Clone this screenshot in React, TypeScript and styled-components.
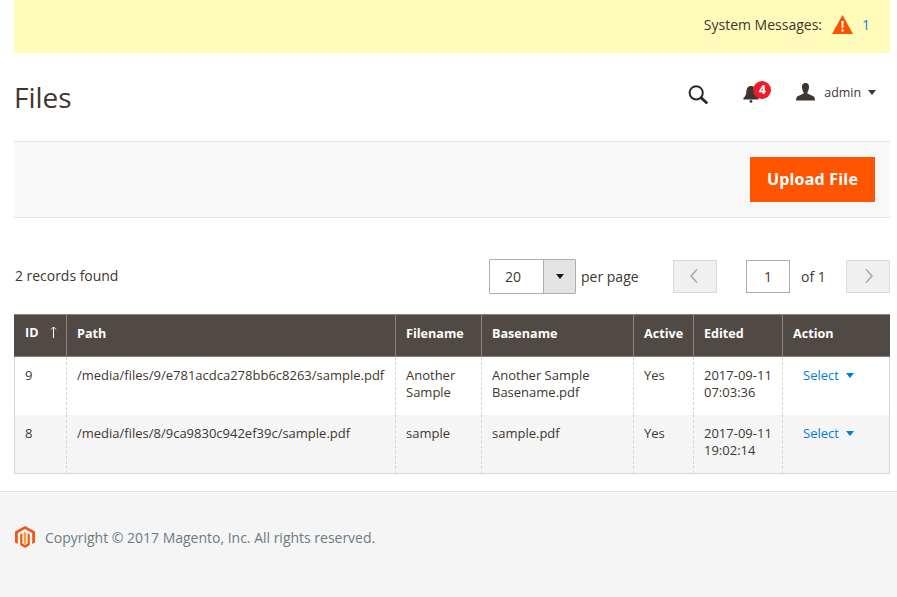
import React from "react";
import styled, { createGlobalStyle } from "styled-components";

const Global = createGlobalStyle`
  html, body { margin: 0; padding: 0; height: 100%; background: #fff; overflow: hidden; }
  body { font-family: "Open Sans", "Liberation Sans", sans-serif; font-size: 14px; color: #41362f; }
  #root { height: 100%; }
`;

const Page = styled.div`
  display: flex; flex-direction: column; height: 597px; width: 897px;
`;
const Main = styled.div`
  padding: 0 7px 0 14px; height: 491px; box-sizing: border-box;
`;
const Banner = styled.div`
  display: flex; align-items: center; justify-content: flex-end; height: 53px; box-sizing: border-box;
  background: #fffbbb; padding: 0 20px 4px 0; font-size: 14px; color: #41362f;
`;
const BannerCount = styled.span`color: #0a86d8; margin-left: 9px;`;
const WarnIcon = styled.svg`margin-left: 10px; display: block;`;
const Header = styled.div`
  display: flex; align-items: center; justify-content: space-between; height: 88px; box-sizing: border-box;
`;
const Title = styled.h1`
  margin: 0; font-size: 28px; font-weight: 400; color: #41362f; line-height: 36px;
`;
const HeaderActions = styled.div`
  display: flex; align-items: center; padding-right: 14px; position: relative; top: -3px;
`;
const SearchSlot = styled.div`display: flex;`;
const BellSlot = styled.div`display: flex; position: relative; margin-left: 35px;`;
const UserSlot = styled.div`display: flex; align-items: center; margin: 0 0 4px 36px;`;
const Badge = styled.span`
  position: absolute; left: 10px; top: -4px; width: 18px; height: 18px; border-radius: 50%;
  background: #ee1c2a; color: #fff; font-size: 12px; font-weight: 700; display: flex; align-items: center; justify-content: center;
  line-height: 1;
`;
const UserName = styled.span`font-size: 12.4px; color: #41362f; margin-left: 9px;`;
const Caret = styled.span<{ $color?: string }>`
  display: inline-block; width: 0; height: 0; border-left: 4px solid transparent; border-right: 4px solid transparent;
  border-top: 5px solid ${(p) => p.$color || "#41362f"};
`;
const UserCaret = styled(Caret)`margin-left: 7px;`;
const ActionsBar = styled.div`
  display: flex; justify-content: flex-end; align-items: center; height: 77px; box-sizing: border-box;
  background: #f8f8f8; border-top: 1px solid #e3e3e3; border-bottom: 1px solid #e3e3e3; padding-right: 15px;
`;
const UploadButton = styled.button`
  width: 125px; height: 45px; background: #ff5501; border: 0; color: #fff; padding: 0 0 2px;
  font: 700 16px "Open Sans", sans-serif; letter-spacing: 0.2px;
`;
const Toolbar = styled.div`
  display: flex; align-items: center; height: 36px; margin-top: 40px; margin-bottom: 20px;
`;
const Records = styled.div`margin-left: 1px; flex: 1; color: #41362f; position: relative; top: -1px; letter-spacing: -0.03px;`;
const SelectBox = styled.div`
  display: flex; width: 87px; height: 35px; box-sizing: border-box; border: 1px solid #adadad; border-radius: 1px; background: #fff;
`;
const SelectValue = styled.div`
  width: 53px; display: flex; align-items: center; padding-left: 15px; box-sizing: border-box; color: #41362f;
`;
const SelectArrow = styled.div`
  flex: 1; background: #e3e3e3; border-left: 1px solid #adadad; display: flex; align-items: center; justify-content: center;
`;
const PerPage = styled.span`margin-left: 5px; width: 57px; margin-right: 35px; white-space: nowrap;`;
const PageButton = styled.div`
  width: 44px; height: 33px; box-sizing: border-box; background: #f0f0f0; border: 1px solid #d9d9d9;
  display: flex; align-items: center; justify-content: center;
`;
const PageInput = styled.div`
  width: 44px; height: 33px; box-sizing: border-box; border: 1px solid #adadad; background: #fff; margin-left: 29px;
  display: flex; align-items: center; justify-content: center; color: #41362f;
`;
const OfText = styled.span`margin-left: 11px; width: 45px; white-space: nowrap;`;
const Grid = styled.table`
  width: 876px; border-collapse: separate; border-spacing: 0; table-layout: fixed; font-size: 13px;
  line-height: 17px;
`;
const Th = styled.th`
  background: #514943; color: #fff; font-weight: 700; font-size: 12.6px; text-align: left; height: 43px; padding: 0 10px 5px; box-sizing: border-box;
  border-top: 1px solid #8a837f; border-bottom: 1px solid #8a837f; border-left: 1px solid #8a837f;
  white-space: nowrap;
  &:first-child { border-left-color: #514943; }
  &:last-child { border-right: 1px solid #514943; }
`;
const SortArrow = styled.span`
  display: inline-block; margin-left: 11px; vertical-align: -1px;
`;
const Tr = styled.tr<{ $alt?: boolean }>`
  background: ${(p) => (p.$alt ? "#f5f5f5" : "#fff")};
`;
const Td = styled.td<{ $last?: boolean }>`
  vertical-align: top; padding: 10px 10px 0; height: 58px; box-sizing: border-box; color: #41362f;
  border-left: 1px dashed #d6d6d6;
  &:first-child { border-left: 1px solid #d6d6d6; }
  &:last-child { border-right: 1px solid #d6d6d6; }
  ${(p) => (p.$last ? "border-bottom: 1px solid #d6d6d6; height: 59px;" : "")}
`;
const Select = styled.span`
  display: inline-flex; align-items: center; color: #007bdb; margin-left: 10px;
`;
const SelectCaret = styled(Caret)`margin-left: 7px;`;
const Footer = styled.footer`
  flex: 1; background: #f5f5f5; border-top: 1px solid #e3e3e3; display: flex; align-items: center; padding: 0 0 15px 15px; box-sizing: border-box;
`;
const Copyright = styled.span`margin-left: 10px; color: #6c7a85; font-size: 14px; letter-spacing: -0.01px;`;

const rows = [
  { id: "9", path: "/media/files/9/e781acdca278bb6c8263/sample.pdf", name: ["Another", "Sample"], base: ["Another Sample", "Basename.pdf"], date: ["2017-09-11", "07:03:36"] },
  { id: "8", path: "/media/files/8/9ca9830c942ef39c/sample.pdf", name: ["sample"], base: ["sample.pdf"], date: ["2017-09-11", "19:02:14"] },
];

const Lines = ({ v }: { v: string[] }) => (
  <>
    {v.map((s, i) => (
      <React.Fragment key={s}>
        {i > 0 && <br />}
        {s}
      </React.Fragment>
    ))}
  </>
);

export default function App() {
  return (
    <Page>
      <Global />
      <Main>
        <Banner>
          System Messages:
          <WarnIcon width="21" height="19" viewBox="0 0 21 19">
            <path d="M10.5 0 L21 19 H0 Z" fill="#fb5200" />
            <path d="M9.3 6 H11.7 L11.2 13.2 H9.8 Z" fill="#fff" />
            <rect x="9.5" y="14.4" width="2" height="2.2" fill="#fff" />
          </WarnIcon>
          <BannerCount>1</BannerCount>
        </Banner>
        <Header>
          <Title>Files</Title>
          <HeaderActions>
            <SearchSlot>
              <svg width="20" height="19" viewBox="0 0 20 19" fill="none" stroke="#2b2a28" strokeWidth="2">
                <circle cx="8.2" cy="7.8" r="6.6" />
                <path d="M13 12.6 L19.3 18.4" strokeWidth="2.8" />
              </svg>
            </SearchSlot>
            <BellSlot>
              <svg width="17" height="18" viewBox="0 0 17 18" fill="#41362f">
                <path d="M8 1 C4.6 1 3.6 3.6 3.4 6.4 C3.2 9.2 2.4 11.2 0.4 13 V14.4 H15.6 V13 C13.6 11.2 12.8 9.2 12.6 6.4 C12.4 3.6 11.4 1 8 1 Z" />
                <circle cx="8" cy="16.4" r="1.4" />
              </svg>
              <Badge>4</Badge>
            </BellSlot>
            <UserSlot>
              <svg width="19" height="18" viewBox="0 0 19 18" fill="#41362f">
                <path d="M9.5 0 C6.6 0 5.8 2.2 6 4.6 C6.2 6.8 7 8.6 7.6 9.4 V10.6 L1.2 13.6 C0.4 14.1 0.2 16 0 17.6 H19 C18.8 16 18.6 14.1 17.8 13.6 L11.4 10.6 V9.4 C12 8.6 12.8 6.8 13 4.6 C13.2 2.2 12.4 0 9.5 0 Z" />
              </svg>
              <UserName>admin</UserName>
              <UserCaret />
            </UserSlot>
          </HeaderActions>
        </Header>
        <ActionsBar>
          <UploadButton>Upload File</UploadButton>
        </ActionsBar>
        <Toolbar>
          <Records>2 records found</Records>
          <SelectBox>
            <SelectValue>20</SelectValue>
            <SelectArrow>
              <Caret $color="#1a1a1a" />
            </SelectArrow>
          </SelectBox>
          <PerPage>per page</PerPage>
          <PageButton>
            <svg width="10" height="14" viewBox="0 0 10 14" fill="none" stroke="#a6a6a6" strokeWidth="1.5">
              <path d="M7 0.5 L1 7 L7 13.5" />
            </svg>
          </PageButton>
          <PageInput>1</PageInput>
          <OfText>of 1</OfText>
          <PageButton>
            <svg width="10" height="14" viewBox="0 0 10 14" fill="none" stroke="#a6a6a6" strokeWidth="1.5">
              <path d="M3 0.5 L9 7 L3 13.5" />
            </svg>
          </PageButton>
        </Toolbar>
        <Grid>
          <colgroup>
            <col style={{ width: 52 }} />
            <col style={{ width: 329 }} />
            <col style={{ width: 86 }} />
            <col style={{ width: 152 }} />
            <col style={{ width: 60 }} />
            <col style={{ width: 89 }} />
            <col style={{ width: 108 }} />
          </colgroup>
          <thead>
            <tr>
              <Th>
                ID
                <SortArrow>
                  <svg width="7" height="12" viewBox="0 0 7 12" fill="none" stroke="#fff" strokeWidth="1">
                    <path d="M3.5 12 V1 M1 3.5 L3.5 1 L6 3.5" />
                  </svg>
                </SortArrow>
              </Th>
              <Th>Path</Th>
              <Th>Filename</Th>
              <Th>Basename</Th>
              <Th>Active</Th>
              <Th>Edited</Th>
              <Th>Action</Th>
            </tr>
          </thead>
          <tbody>
            {rows.map((r, i) => {
              const last = i === rows.length - 1;
              return (
                <Tr key={r.id} $alt={i % 2 === 1}>
                  <Td $last={last}>{r.id}</Td>
                  <Td $last={last}>{r.path}</Td>
                  <Td $last={last}><Lines v={r.name} /></Td>
                  <Td $last={last}><Lines v={r.base} /></Td>
                  <Td $last={last}>Yes</Td>
                  <Td $last={last}><Lines v={r.date} /></Td>
                  <Td $last={last}>
                    <Select>
                      Select
                      <SelectCaret $color="#007bdb" />
                    </Select>
                  </Td>
                </Tr>
              );
            })}
          </tbody>
        </Grid>
      </Main>
      <Footer>
        <svg width="20" height="22" viewBox="0 0 20 22">
          <path d="M10 0 L20 5.5 V16.5 L17.2 18 V7 L10 3 L2.8 7 V18 L0 16.5 V5.5 Z" fill="#f4541a" />
          <path d="M5.2 8.4 L7.4 7.2 V17.6 L10 19 L12.6 17.6 V7.2 L14.8 8.4 V19 L10 22 L5.2 19 Z" fill="#f4541a" />
          <path d="M8.9 6.6 L10 6 L11.1 6.6 V17.4 L10 18 L8.9 17.4 Z" fill="#f9a11b" />
        </svg>
        <Copyright>Copyright © 2017 Magento, Inc. All rights reserved.</Copyright>
      </Footer>
    </Page>
  );
}
